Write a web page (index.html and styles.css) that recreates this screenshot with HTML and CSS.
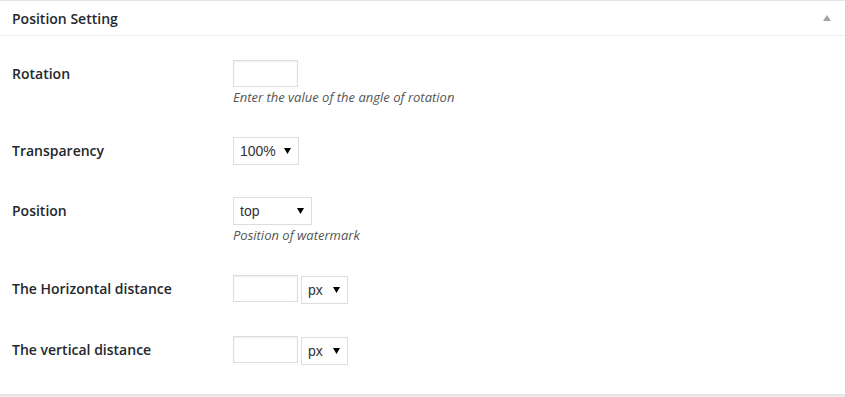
FILE: index.html
```html
<!DOCTYPE html>
<html>
<head>
<meta charset="utf-8">
<link rel="stylesheet" href="styles.css">
</head>
<body>
<div class="postbox">
  <h2 class="hndle">
    <span>Position Setting</span>
    <svg class="toggle" width="8" height="6" viewBox="0 0 8 6"><polygon points="4,0 8,6 0,6" fill="#a0a5aa"/></svg>
  </h2>
  <div class="inside">
    <div class="row">
      <div class="label">Rotation</div>
      <div class="field">
        <input type="text" class="num">
        <p class="desc">Enter the value of the angle of rotation</p>
      </div>
    </div>
    <div class="row">
      <div class="label">Transparency</div>
      <div class="field">
        <select class="sel sel-pct"><option>100%</option></select>
      </div>
    </div>
    <div class="row">
      <div class="label">Position</div>
      <div class="field">
        <select class="sel sel-pos"><option>top</option></select>
        <p class="desc">Position of watermark</p>
      </div>
    </div>
    <div class="row">
      <div class="label">The Horizontal distance</div>
      <div class="field inline">
        <input type="text" class="num">
        <select class="sel sel-unit"><option>px</option></select>
      </div>
    </div>
    <div class="row row-last">
      <div class="label">The vertical distance</div>
      <div class="field inline">
        <input type="text" class="num">
        <select class="sel sel-unit"><option>px</option></select>
      </div>
    </div>
  </div>
</div>
</body>
</html>
```

FILE: styles.css
```css
html, body {
  margin: 0;
  padding: 0;
  background: #f1f1f1;
}
body {
  font-family: "Open Sans", "Noto Sans", sans-serif;
  color: #23282d;
  height: 397px;
  overflow: hidden;
}
.postbox {
  background: #fff;
  border-top: 1px solid #e5e5e5;
  border-bottom: 1px solid #e5e5e5;
  box-shadow: 0 1px 1px rgba(0,0,0,.04);
}
.hndle {
  margin: 0;
  height: 35px;
  box-sizing: border-box;
  padding: 0 12px;
  font-size: 14px;
  font-weight: 600;
  line-height: 35px;
  border-bottom: 1px solid #eee;
  display: flex;
  justify-content: space-between;
  align-items: center;
}
.toggle {
  margin-right: 2px;
  margin-top: -1px;
}
.inside {
  padding: 8px 12px 14px;
}
.row {
  display: grid;
  grid-template-columns: 221px 1fr;
  padding: 16px 0 15px;
  min-height: 60px;
  box-sizing: border-box;
}
.row-last {
  padding-top: 17px;
}
.label {
  font-size: 14px;
  font-weight: 600;
  line-height: 28px;
  height: 28px;
}
.field {
  display: flex;
  flex-direction: column;
  align-items: flex-start;
}
.field.inline {
  flex-direction: row;
  align-items: flex-start;
  gap: 3px;
}
.num {
  width: 65px;
  height: 27px;
  box-sizing: border-box;
  border: 1px solid #ddd;
  box-shadow: inset 0 1px 2px rgba(0,0,0,.07);
  background: #fff;
  margin: 0;
  padding: 3px 5px;
  font-size: 14px;
  outline: none;
}
.sel {
  -webkit-appearance: none;
  appearance: none;
  height: 28px;
  box-sizing: border-box;
  border: 1px solid #ddd;
  border-radius: 0;
  background: #fff url("data:image/svg+xml;utf8,<svg xmlns='http://www.w3.org/2000/svg' width='7' height='6' viewBox='0 0 7 6'><polygon points='0,0 7,0 3.5,6' fill='black'/></svg>") no-repeat right 7px center;
  margin: 0;
  padding: 0 18px 0 6px;
  font-family: "Liberation Sans", Arial, sans-serif;
  font-size: 14px;
  color: #333;
  line-height: 26px;
}
.sel-pct { width: 66px; }
.sel-pos { width: 79px; }
.sel-unit { width: 47px; margin-top: 1px; }
.desc {
  margin: 1px 0 0;
  font-size: 13px;
  font-style: italic;
  line-height: 18px;
  color: #555;
}
```
